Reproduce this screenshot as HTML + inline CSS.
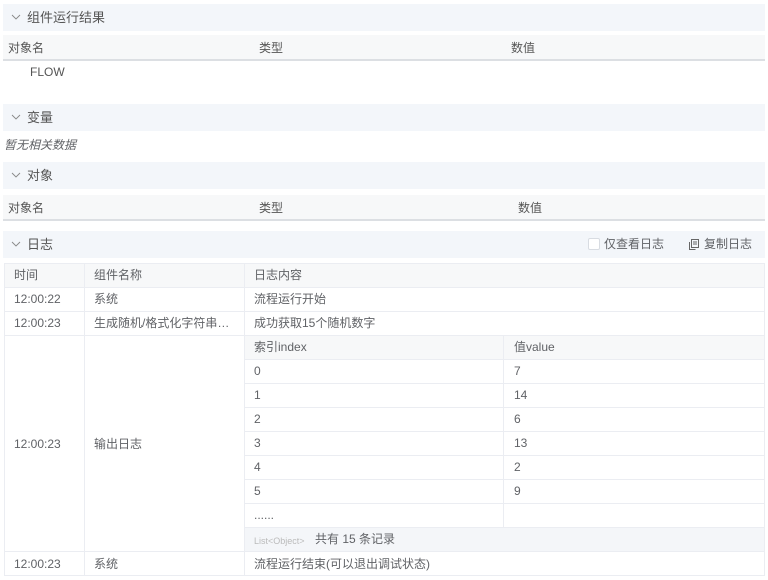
<!DOCTYPE html>
<html><head><meta charset="utf-8"><style>
*{margin:0;padding:0;box-sizing:border-box}
body{width:768px;height:580px;background:#fff;position:relative;font-family:"Liberation Sans","Noto Sans CJK SC",sans-serif;font-size:12px;line-height:14px;color:#606266;overflow:hidden}
.a{position:absolute;white-space:nowrap}
.hd{position:absolute;left:3px;width:762px;height:27px;background:#f3f6fa}
.hd span{position:absolute;left:24px;top:6px;font-size:13px;line-height:15px;color:#555}
.hd svg{position:absolute;left:8px;top:10px}
.th{position:absolute;left:3px;width:762px;height:26px;background:#f7f8f9;border-bottom:2px solid #dcdfe3}
.th span{position:absolute;top:6px;color:#555}
.hl{position:absolute;height:1px;background:#ebedf2}
.vl{position:absolute;width:1px;background:#ebedf2}
.c{position:absolute;white-space:nowrap;color:#606266}
</style></head><body>
<div class="hd" style="top:4px"><svg width="10" height="7" viewBox="0 0 10 7"><path d="M1 1l4 4 4-4" fill="none" stroke="#888" stroke-width="0.9"/></svg><span>组件运行结果</span></div>
<div class="th" style="top:35px"><span style="left:5px">对象名</span><span style="left:256px">类型</span><span style="left:508px">数值</span></div>
<div class="a" style="left:30px;top:65px;color:#555">FLOW</div>

<div class="hd" style="top:104px"><svg width="10" height="7" viewBox="0 0 10 7"><path d="M1 1l4 4 4-4" fill="none" stroke="#888" stroke-width="0.9"/></svg><span>变量</span></div>
<div class="a" style="left:4px;top:138px;font-style:italic;color:#606266">暂无相关数据</div>

<div class="hd" style="top:162px"><svg width="10" height="7" viewBox="0 0 10 7"><path d="M1 1l4 4 4-4" fill="none" stroke="#888" stroke-width="0.9"/></svg><span>对象</span></div>
<div class="th" style="top:195px;height:26px"><span style="left:5px">对象名</span><span style="left:256px">类型</span><span style="left:515px">数值</span></div>

<div class="hd" style="top:231px"><svg width="10" height="7" viewBox="0 0 10 7"><path d="M1 1l4 4 4-4" fill="none" stroke="#888" stroke-width="0.9"/></svg><span>日志</span>
<div style="position:absolute;left:585px;top:7px;width:12px;height:12px;border:1px solid #d8dce2;border-radius:2px;background:#fff"></div>
<div class="a" style="left:601px;top:6px;color:#606266">仅查看日志</div>
<svg style="position:absolute;left:686px;top:8px" width="10" height="11" viewBox="0 0 10 11"><rect x="2.5" y="0.5" width="7" height="8" fill="none" stroke="#666"/><path d="M0.5 3v7.5h6" fill="none" stroke="#666"/><path d="M4 3h4M4 5h4" stroke="#666"/></svg>
<div class="a" style="left:701px;top:6px;color:#606266">复制日志</div>
</div>

<div style="position:absolute;left:4px;top:263px;width:761px;height:24px;background:#f7f8f9"></div>
<div style="position:absolute;left:244px;top:335px;width:520px;height:24px;background:#f7f8f9"></div>
<div style="position:absolute;left:244px;top:527px;width:520px;height:24px;background:#f4f6f9"></div>
<div class="hl" style="left:4px;top:263px;width:761px"></div>
<div class="hl" style="left:4px;top:287px;width:761px"></div>
<div class="hl" style="left:4px;top:311px;width:761px"></div>
<div class="hl" style="left:4px;top:335px;width:761px"></div>
<div class="hl" style="left:4px;top:551px;width:761px"></div>
<div class="hl" style="left:4px;top:575px;width:761px"></div>
<div class="hl" style="left:244px;top:359px;width:520px"></div>
<div class="hl" style="left:244px;top:383px;width:520px"></div>
<div class="hl" style="left:244px;top:407px;width:520px"></div>
<div class="hl" style="left:244px;top:431px;width:520px"></div>
<div class="hl" style="left:244px;top:455px;width:520px"></div>
<div class="hl" style="left:244px;top:479px;width:520px"></div>
<div class="hl" style="left:244px;top:503px;width:520px"></div>
<div class="hl" style="left:244px;top:527px;width:520px"></div>
<div class="vl" style="left:4px;top:263px;height:313px"></div>
<div class="vl" style="left:84px;top:263px;height:313px"></div>
<div class="vl" style="left:244px;top:263px;height:313px"></div>
<div class="vl" style="left:764px;top:263px;height:313px"></div>
<div class="vl" style="left:503px;top:335px;height:192px"></div>

<div class="c" style="left:14px;top:268px">时间</div>
<div class="c" style="left:94px;top:268px">组件名称</div>
<div class="c" style="left:254px;top:268px">日志内容</div>
<div class="c" style="left:14px;top:292px">12:00:22</div>
<div class="c" style="left:94px;top:292px">系统</div>
<div class="c" style="left:254px;top:292px">流程运行开始</div>
<div class="c" style="left:14px;top:316px">12:00:23</div>
<div class="c" style="left:94px;top:316px">生成随机/格式化字符串…</div>
<div class="c" style="left:254px;top:316px">成功获取15个随机数字</div>
<div class="c" style="left:14px;top:437px">12:00:23</div>
<div class="c" style="left:94px;top:437px">输出日志</div>
<div class="c" style="left:254px;top:340px">索引index</div>
<div class="c" style="left:514px;top:340px">值value</div>
<div class="c" style="left:254px;top:364px">0</div><div class="c" style="left:514px;top:364px">7</div>
<div class="c" style="left:254px;top:388px">1</div><div class="c" style="left:514px;top:388px">14</div>
<div class="c" style="left:254px;top:412px">2</div><div class="c" style="left:514px;top:412px">6</div>
<div class="c" style="left:254px;top:436px">3</div><div class="c" style="left:514px;top:436px">13</div>
<div class="c" style="left:254px;top:460px">4</div><div class="c" style="left:514px;top:460px">2</div>
<div class="c" style="left:254px;top:484px">5</div><div class="c" style="left:514px;top:484px">9</div>
<div class="c" style="left:254px;top:508px">......</div>
<div class="c" style="left:254px;top:534px;font-size:9px;color:#bbb">List&lt;Object&gt;</div>
<div class="c" style="left:315px;top:532px">共有 15 条记录</div>
<div class="c" style="left:14px;top:557px">12:00:23</div>
<div class="c" style="left:94px;top:557px">系统</div>
<div class="c" style="left:254px;top:557px">流程运行结束(可以退出调试状态)</div>
</body></html>
